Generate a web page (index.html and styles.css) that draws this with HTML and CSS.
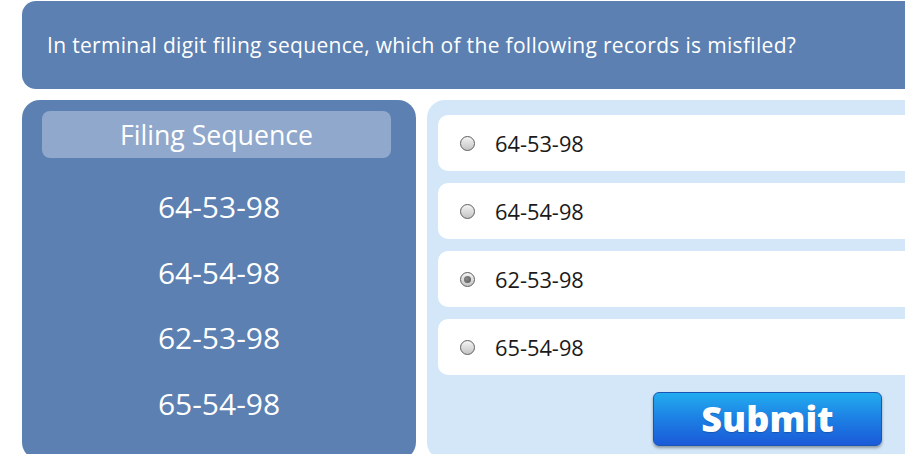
FILE: index.html
```html
<!DOCTYPE html>
<html>
<head>
<meta charset="utf-8">
<link rel="stylesheet" href="styles.css">
</head>
<body>
<div class="page">
  <div class="question">In terminal digit filing sequence, which of the following records is misfiled?</div>
  <div class="panels">
    <div class="seq">
      <div class="seq-title">Filing Sequence</div>
      <div class="seq-list">
        <div class="seq-item">64-53-98</div>
        <div class="seq-item">64-54-98</div>
        <div class="seq-item">62-53-98</div>
        <div class="seq-item">65-54-98</div>
      </div>
    </div>
    <div class="answers">
      <div class="option"><span class="radio"></span><span class="label">64-53-98</span></div>
      <div class="option"><span class="radio"></span><span class="label">64-54-98</span></div>
      <div class="option"><span class="radio checked"></span><span class="label">62-53-98</span></div>
      <div class="option"><span class="radio"></span><span class="label">65-54-98</span></div>
      <div class="actions"><button class="submit">Submit</button></div>
    </div>
  </div>
</div>
</body>
</html>
```
FILE: styles.css
```css
html, body {
  margin: 0;
  padding: 0;
  background: #ffffff;
  overflow: hidden;
}
body {
  width: 905px;
  height: 454px;
  font-family: "Open Sans", "Liberation Sans", sans-serif;
}
.page {
  padding: 1px 0 0 22px;
  width: 1000px;
}
.question {
  background: #5b80b1;
  color: #ffffff;
  height: 88px;
  border-radius: 14px;
  box-sizing: border-box;
  padding: 0 0 0 25px;
  display: flex;
  align-items: center;
  font-size: 21px;
  letter-spacing: 0.32px;
}
.panels {
  display: flex;
  gap: 11px;
  margin-top: 11px;
}
.seq {
  width: 394px;
  height: 360px;
  flex: none;
  background: #5b80b1;
  border-radius: 18px;
  box-sizing: border-box;
  padding: 11px 25px 0 20px;
}
.seq-title {
  height: 47px;
  background: #8fa8cb;
  border-radius: 8px;
  color: #ffffff;
  font-size: 26.7px;
  display: flex;
  align-items: center;
  justify-content: center;
}
.seq-list {
  margin: 16px -25px 0 -20px;
  display: flex;
  flex-direction: column;
}
.seq-item {
  height: 65.7px;
  display: flex;
  align-items: center;
  justify-content: center;
  color: #ffffff;
  font-size: 30px;
  line-height: 1;
}
.answers {
  flex: 1;
  height: 360px;
  background: #d3e7f8;
  border-radius: 18px;
  box-sizing: border-box;
  padding: 15px 0 0 11px;
  display: flex;
  flex-direction: column;
  gap: 12px;
}
.option {
  height: 56px;
  background: #ffffff;
  border-radius: 10px;
  display: flex;
  align-items: center;
  padding-left: 22px;
}
.radio {
  width: 13px;
  height: 13px;
  border: 1px solid #5e5e5e;
  border-radius: 50%;
  background: linear-gradient(#f4f4f4, #c4c4c4);
  display: flex;
  align-items: center;
  justify-content: center;
  flex: none;
}
.radio.checked::after {
  content: "";
  width: 7px;
  height: 7px;
  border-radius: 50%;
  background: radial-gradient(circle at 40% 40%, #8a8a8a, #555555);
}
.label {
  margin-left: 20px;
  font-size: 21.8px;
  color: #1a1a1a;
}
.actions {
  margin-top: 5px;
  padding-left: 215px;
}
.submit {
  width: 229px;
  height: 54px;
  border: 1px solid #1a55b8;
  border-radius: 6px;
  background: linear-gradient(#22acef, #1d7fe4 50%, #1a5ad8);
  box-shadow: 0 2px 3px rgba(0, 0, 0, 0.35);
  color: #ffffff;
  font-family: "Open Sans", "Liberation Sans", sans-serif;
  font-weight: 800;
  font-size: 36px;
  padding: 0;
  line-height: 1;
  text-shadow: 0 1px 1px rgba(0, 0, 0, 0.2);
}
```
